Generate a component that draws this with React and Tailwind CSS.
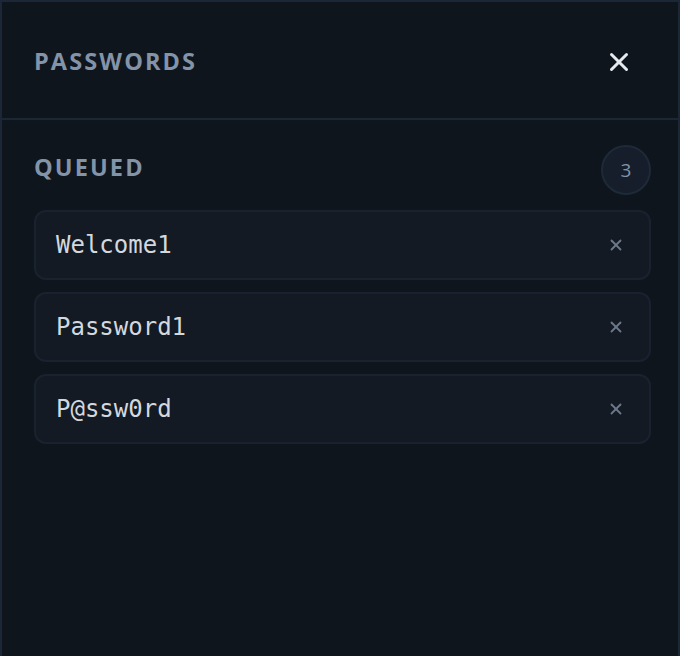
import { X } from 'lucide-react';

const queued = ['Welcome1', 'Password1', 'P@ssw0rd'];

export default function App() {
  return (
    <div className="w-[680px] h-[656px] bg-[#0f151d] border-2 border-b-0 border-[#1c2735] flex flex-col font-['Open_Sans',sans-serif]">
      <div className="h-[118px] shrink-0 flex items-center justify-between pl-[32px] pr-[44px] pt-[3px] border-b-2 border-[#1c2735]">
        <h2 className="text-[23.5px] font-bold tracking-[0.09em] text-[#8393a8]">PASSWORDS</h2>
        <button className="text-[#e6e9ee]">
          <X size={30} strokeWidth={2.4} />
        </button>
      </div>
      <div className="pl-[32px] pr-[27px] pt-[25px]">
        <div className="flex items-center justify-between">
          <h3 className="text-[23.5px] font-bold tracking-[0.09em] text-[#8393a8] -mt-[4px]">QUEUED</h3>
          <span className="w-[50px] h-[50px] rounded-full bg-[#151e2a] border-2 border-[#1e2a39] flex items-center justify-center text-[19px] text-[#8393a8]">
            3
          </span>
        </div>
        <ul className="mt-[15px] flex flex-col gap-[12px]">
          {queued.map((pw) => (
            <li
              key={pw}
              className="h-[70px] rounded-[12px] bg-[#131a24] border-2 border-[#19222e] flex items-center justify-between pl-[20px] pr-[24px]"
            >
              <span className="font-['DejaVu_Sans_Mono',monospace] text-[24px] text-[#d3d8df] -mt-[1px]">{pw}</span>
              <X size={18} strokeWidth={2.4} className="text-[#6d798b]" />
            </li>
          ))}
        </ul>
      </div>
    </div>
  );
}
